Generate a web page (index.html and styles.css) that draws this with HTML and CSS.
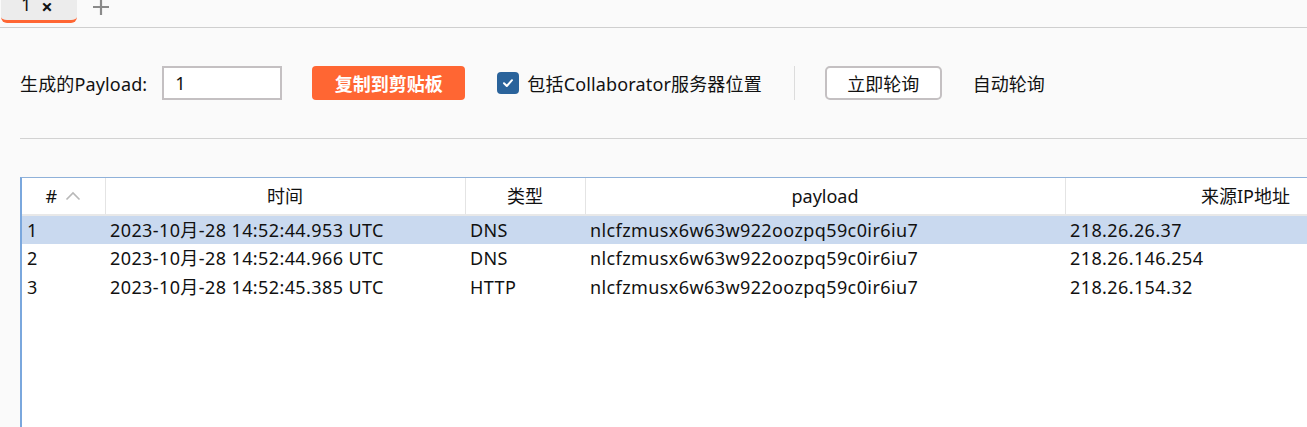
FILE: index.html
```html
<!DOCTYPE html>
<html lang="zh-CN">
<head>
<meta charset="utf-8">
<title>Collaborator</title>
<link rel="stylesheet" href="styles.css">
</head>
<body>
<div class="page">
  <div class="tabbar">
    <div class="tab"><span class="tab-num">1</span><span class="tab-close">×</span></div>
    <div class="tab-add">
      <svg width="18" height="18" viewBox="0 0 18 18"><path d="M9 1V17M1 9H17" stroke="#8a8a8a" stroke-width="2.2" fill="none"/></svg>
    </div>
  </div>

  <div class="toolbar">
    <span class="label">生成的Payload:</span>
    <div class="input">1</div>
    <button class="btn-primary">复制到剪贴板</button>
    <label class="check">
      <span class="box"><svg width="14" height="14" viewBox="0 0 14 14"><path d="M3 7.3L5.8 10L11 4.2" stroke="#fff" stroke-width="2" fill="none" stroke-linecap="round" stroke-linejoin="round"/></svg></span>
      <span class="check-text">包括Collaborator服务器位置</span>
    </label>
    <span class="vsep"></span>
    <button class="btn">立即轮询</button>
    <span class="auto">自动轮询</span>
  </div>

  <div class="divider"></div>

  <div class="table-wrap">
    <table class="grid">
      <colgroup>
        <col class="c-num"><col class="c-time"><col class="c-type"><col class="c-payload"><col class="c-ip">
      </colgroup>
      <thead>
        <tr>
          <th># <svg class="sort" width="16" height="10" viewBox="0 0 16 10"><path d="M1.5 8.5L8 2L14.5 8.5" stroke="#b8b8b8" stroke-width="1.6" fill="none"/></svg></th>
          <th>时间</th>
          <th>类型</th>
          <th>payload</th>
          <th>来源IP地址</th>
        </tr>
      </thead>
      <tbody>
        <tr class="selected"><td>1</td><td>2023-10月-28 14:52:44.953 UTC</td><td>DNS</td><td>nlcfzmusx6w63w922oozpq59c0ir6iu7</td><td>218.26.26.37</td></tr>
        <tr><td>2</td><td>2023-10月-28 14:52:44.966 UTC</td><td>DNS</td><td>nlcfzmusx6w63w922oozpq59c0ir6iu7</td><td>218.26.146.254</td></tr>
        <tr><td>3</td><td>2023-10月-28 14:52:45.385 UTC</td><td>HTTP</td><td>nlcfzmusx6w63w922oozpq59c0ir6iu7</td><td>218.26.154.32</td></tr>
      </tbody>
    </table>
  </div>
</div>
</body>
</html>
```
FILE: styles.css
```css
* { box-sizing: border-box; }
html, body { margin: 0; padding: 0; height: 100%; }
body {
  background: #fafafa;
  color: #111;
  font-family: "Noto Sans", "Noto Sans CJK SC", sans-serif;
  font-size: 18px;
  overflow: hidden;
}
.page { display: flex; flex-direction: column; height: 100vh; }

.tabbar {
  height: 28px;
  border-bottom: 1px solid #cfcfcf;
  display: flex;
  align-items: flex-start;
  padding-left: 1px;
  flex: none;
}
.tab {
  width: 76px;
  height: 23px;
  background: #ececec;
  border-radius: 0 0 6px 6px;
  border-bottom: 3px solid #ff6633;
  display: flex;
  align-items: flex-start;
  padding-left: 20px;
  gap: 10px;
  line-height: 16px;
}
.tab-num { font-size: 18px; margin-top: -4px; }
.tab-close { font-size: 20px; font-weight: bold; margin-top: -1px; }
.tab-add { margin-left: 15px; margin-top: -3px; }

.toolbar {
  display: flex;
  align-items: center;
  height: 34px;
  margin: 38px 0 38px 20px;
  flex: none;
}
.label { margin-right: 15px; letter-spacing: 0.15px; }
.input {
  width: 120px;
  height: 34px;
  border: 2px solid #c4c0c2;
  background: #fff;
  padding-left: 11px;
  line-height: 30px;
}
.btn-primary {
  margin-left: 30px;
  width: 153px;
  height: 34px;
  border: none;
  border-radius: 4px;
  background: #ff6633;
  color: #fff;
  font: bold 18px "Noto Sans CJK SC", sans-serif;
  padding: 0;
}
.check { display: flex; align-items: center; margin-left: 32px; gap: 8px; }
.check-text { letter-spacing: 0.15px; }
.box {
  width: 22px; height: 22px;
  border-radius: 4px;
  background: #2a639b;
  display: flex; align-items: center; justify-content: center;
}
.vsep { width: 1px; height: 34px; background: #dcdcdc; margin-left: 32px; }
.btn {
  margin-left: 30px;
  width: 117px;
  height: 34px;
  background: #fff;
  border: 2px solid #c4c0c2;
  border-radius: 5px;
  font: 18px "Noto Sans CJK SC", sans-serif;
  color: #111;
  padding: 0;
}
.auto { margin-left: 31px; }

.divider { height: 1px; background: #d2d2d2; margin-left: 20px; flex: none; }

.table-wrap {
  margin: 38px 0 0 20px;
  flex: 1;
  background: #fff;
  border-top: 1px solid #8fb1d9;
  border-left: 2px solid #7aa7dd;
  overflow: hidden;
}
.grid {
  border-collapse: collapse;
  table-layout: fixed;
  width: 1404px;
}
.c-num { width: 83px; }
.c-time { width: 360px; }
.c-type { width: 120px; }
.c-payload { width: 480px; }
.c-ip { width: 361px; }
.grid th {
  height: 37px;
  font-weight: normal;
  text-align: center;
  border-right: 1px solid #e4e4e4;
  border-bottom: 2px solid #e8e8e8;
  padding: 0;
  white-space: nowrap;
  line-height: 20px;
}
.sort { margin-left: 3px; vertical-align: 2px; }
.grid td {
  height: 28.7px;
  padding: 0 0 0 5px;
  white-space: nowrap;
  overflow: hidden;
  line-height: 20px;
  letter-spacing: 0.4px;
}
.grid tr.selected td { background: #c9d9ef; }
```
